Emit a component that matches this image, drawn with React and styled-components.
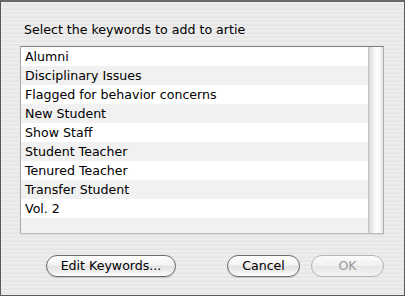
import React from "react";
import styled, { createGlobalStyle } from "styled-components";

const Global = createGlobalStyle`
  html, body { margin: 0; padding: 0; background: #e9e9e9; }
  * { box-sizing: border-box; }
`;

const FONT = `"DejaVu Sans", "Noto Sans", sans-serif`;

const Window = styled.div`
  width: 405px;
  height: 296px;
  border: 1px solid #5a5a5a;
  border-top: 2px solid #6a6a6a;
  background: repeating-linear-gradient(
    to bottom,
    #ededed 0px,
    #ededed 2px,
    #e7e7e7 2px,
    #e7e7e7 4px
  );
  font-family: ${FONT};
  display: flex;
  flex-direction: column;
  padding: 19px 20px 0 19px;
  overflow: hidden;
`;

const Title = styled.div`
  font-size: 12.6px;
  line-height: 17px;
  color: #000;
  margin-left: 4px;
  margin-bottom: 8px;
  white-space: nowrap;
`;

const ListBox = styled.div`
  display: flex;
  width: 364px;
  height: 188px;
  background: #fff;
  border: 1px solid #a9a9a9;
  border-top-color: #7f7f7f;
  border-bottom-color: #bdbdbd;
  box-shadow: 0 1px 1px rgba(0, 0, 0, 0.08);
`;

const Rows = styled.div`
  flex: 1;
  display: flex;
  flex-direction: column;
  overflow: hidden;
`;

const Row = styled.div`
  height: 19px;
  flex: 0 0 19px;
  line-height: 19px;
  padding-left: 4px;
  font-size: 12.6px;
  color: #000;
  white-space: nowrap;
  background: ${(p) => (p.$odd ? "#f1f1f1" : "#ffffff")};
`;

const ScrollTrack = styled.div`
  width: 15px;
  flex: 0 0 15px;
  border-left: 1px solid #c4c4c4;
  background: linear-gradient(
    to right,
    #d6d6d6 0%,
    #eeeeee 25%,
    #ffffff 55%,
    #f6f6f6 80%,
    #e2e2e2 100%
  );
`;

const ButtonRow = styled.div`
  display: flex;
  align-items: center;
  gap: 11px;
  margin-top: 21px;
  padding-left: 26px;
`;

const Button = styled.div`
  height: 22px;
  width: ${(p) => p.$w}px;
  border-radius: 11px;
  border: 1px solid ${(p) => (p.$disabled ? "#b4b4b4" : "#6b6b6b")};
  background: ${(p) =>
    p.$disabled
      ? "linear-gradient(to bottom, #fbfbfb 0%, #f0f0f0 50%, #e6e6e6 51%, #f4f4f4 100%)"
      : "linear-gradient(to bottom, #ffffff 0%, #f3f3f3 45%, #e2e2e2 52%, #f0f0f0 80%, #ffffff 100%)"};
  box-shadow: ${(p) => (p.$disabled ? "none" : "0 1px 1px rgba(0,0,0,0.15)")};
  color: ${(p) => (p.$disabled ? "#9a9a9a" : "#000")};
  font-family: ${FONT};
  font-size: 12.6px;
  line-height: 20px;
  text-align: center;
  white-space: nowrap;
`;

const Spacer = styled.div`
  flex: 1;
`;

const keywords = [
  "Alumni",
  "Disciplinary Issues",
  "Flagged for behavior concerns",
  "New Student",
  "Show Staff",
  "Student Teacher",
  "Tenured Teacher",
  "Transfer Student",
  "Vol. 2",
  "",
];

export default function App() {
  return (
    <>
      <Global />
      <Window>
        <Title>Select the keywords to add to artie</Title>
        <ListBox>
          <Rows>
            {keywords.map((k, i) => (
              <Row key={i} $odd={i % 2 === 1}>
                {k}
              </Row>
            ))}
          </Rows>
          <ScrollTrack />
        </ListBox>
        <ButtonRow>
          <Button $w={130}>Edit Keywords...</Button>
          <Spacer />
          <Button $w={73}>Cancel</Button>
          <Button $w={73} $disabled>
            OK
          </Button>
        </ButtonRow>
      </Window>
    </>
  );
}
